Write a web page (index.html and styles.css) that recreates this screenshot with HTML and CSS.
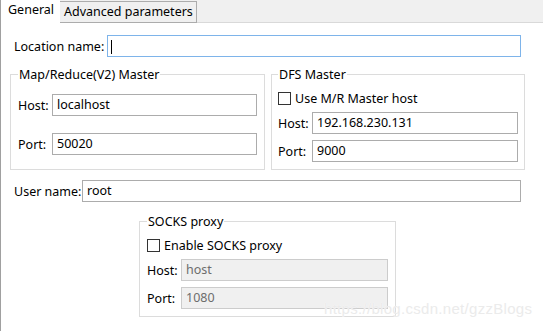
FILE: index.html
```html
<!DOCTYPE html>
<html lang="en">
<head>
  <meta charset="UTF-8">
  <title>Hadoop location</title>
  <link rel="stylesheet" href="styles.css">
</head>
<body>
  <div class="tabs">
    <div class="tab active">General</div>
    <div class="tab">Advanced parameters</div>
    <div class="tab-fill"></div>
  </div>

  <div class="panel">
    <div class="row location">
      <label>Location name:</label>
      <div class="field focus"><span class="caret"></span></div>
    </div>

    <div class="groups">
      <fieldset class="group mr">
        <legend>Map/Reduce(V2) Master</legend>
        <div class="pair">
          <label>Host:</label>
          <div class="field">localhost</div>
        </div>
        <div class="pair">
          <label>Port:</label>
          <div class="field">50020</div>
        </div>
      </fieldset>

      <fieldset class="group dfs">
        <legend>DFS Master</legend>
        <div class="check"><span class="box"></span>Use M/R Master host</div>
        <div class="pair">
          <label>Host:</label>
          <div class="field">192.168.230.131</div>
        </div>
        <div class="pair">
          <label>Port:</label>
          <div class="field">9000</div>
        </div>
      </fieldset>
    </div>

    <div class="row user">
      <label>User name:</label>
      <div class="field">root</div>
    </div>

    <fieldset class="group socks">
      <legend>SOCKS proxy</legend>
      <div class="check"><span class="box"></span>Enable SOCKS proxy</div>
      <div class="pair">
        <label>Host:</label>
        <div class="field disabled">host</div>
      </div>
      <div class="pair">
        <label>Port:</label>
        <div class="field disabled">1080</div>
      </div>
    </fieldset>
  </div>

  <div class="watermark">https://blog.csdn.net/gzzBlogs</div>
</body>
</html>
```

FILE: styles.css
```css
body {
  margin: 0;
  padding: 0;
  font-family: "Noto Sans", "Open Sans", sans-serif;
  font-size: 12.5px;
  color: #000;
  background-color: #fff;
  width: 543px;
  height: 331px;
  overflow: hidden;
  position: relative;
  white-space: nowrap;
}
label {
  flex-shrink: 0;
}
.tabs {
  display: flex;
  height: 23px;
  background-color: #f0f0f0;
}
.tab {
  height: 22px;
  box-sizing: border-box;
  border: 1px solid #acacac;
  border-top: none;
}
.tab.active {
  width: 60px;
  height: 23px;
  background-color: #fff;
  border: none;
  border-left: 1px solid #a0a0a0;
  padding-left: 7px;
  line-height: 20px;
}
.tab:not(.active) {
  width: 137px;
  margin-top: 1px;
  padding-left: 4px;
  border-top: 1px solid #acacac;
  border-left: none;
  line-height: 20px;
}
.tab-fill {
  flex: 1;
  border-bottom: 1px solid #d9d9d9;
}
.panel {
  border-left: 1px solid #a0a0a0;
  height: 308px;
  padding: 12px 22px 0 13px;
}
.row {
  display: flex;
  align-items: center;
  height: 22px;
}
.row label {
  width: 93px;
}
.row.user label {
  width: 68px;
}
.field {
  flex: 1;
  height: 22px;
  box-sizing: border-box;
  border: 1px solid #acacac;
  padding: 0 4px;
  line-height: 20px;
}
.field.focus {
  border-color: #7eb4ea;
  padding-left: 3px;
}
.caret {
  display: inline-block;
  width: 1px;
  height: 14px;
  background-color: #000;
  vertical-align: middle;
}
.field.disabled {
  background-color: #f0f0f0;
  border-color: #cccccc;
  color: #6d6d6d;
}
.groups {
  display: grid;
  grid-template-columns: 255px 254px;
  column-gap: 6px;
  margin: 9px 0 0 -4px;
}
.group {
  margin: 0;
  border: 1px solid #dcdcdc;
  padding: 0 7px 12px 7px;
  min-width: 0;
}
.group legend {
  padding: 0 1px;
  line-height: 17px;
  height: 17px;
}
.pair {
  display: flex;
  align-items: center;
  margin-top: 17px;
}
.pair label {
  width: 34px;
}
.mr {
  padding-top: 11px;
}
.mr .pair:first-of-type {
  margin-top: 0;
}
.dfs {
  padding: 7px 6px 7px 6px;
}
.dfs .pair {
  margin-top: 6px;
}
.check {
  display: flex;
  align-items: center;
  height: 16px;
}
.box {
  width: 13px;
  height: 13px;
  box-sizing: border-box;
  border: 1px solid #333;
  background-color: #fff;
  margin-right: 4px;
}
.row.user {
  margin-top: 10px;
}
.socks {
  width: 257px;
  box-sizing: border-box;
  margin: 11px 0 0 125px;
  padding: 7px 7px 7px 7px;
}
.socks .pair {
  margin-top: 6px;
}
.watermark {
  position: absolute;
  left: 324px;
  top: 300px;
  font-family: "Liberation Sans", Arial, sans-serif;
  font-size: 15px;
  color: #ebebeb;
  text-shadow: 0 0 1px #fff;
  letter-spacing: 0.3px;
}
```
